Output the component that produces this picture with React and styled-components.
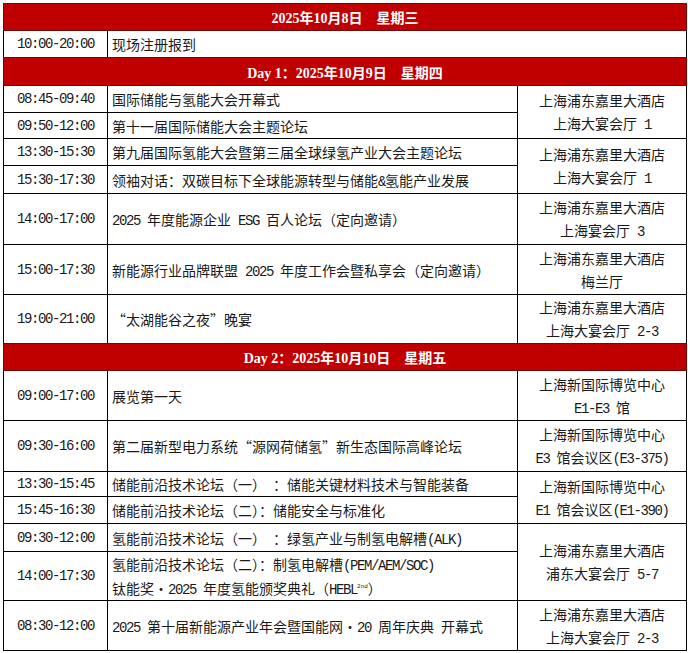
import React from "react";
import styled, { createGlobalStyle } from "styled-components";

const GlobalStyle = createGlobalStyle`
  body {
    margin: 0;
    background: #ffffff;
  }
`;

const HOTEL = "上海浦东嘉里大酒店";
const EXPO = "上海新国际博览中心";

// each section: header title + rows; venue.span tells how many rows it covers
const sections = [
  {
    title: "2025年10月8日　星期三",
    h: 26,
    rows: [
      { time: "10:00-20:00", h: 26, desc: ["现场注册报到"], wide: true },
    ],
  },
  {
    title: "Day 1：2025年10月9日　星期四",
    h: 27,
    rows: [
      { time: "08:45-09:40", h: 26, desc: ["国际储能与氢能大会开幕式"], venue: { span: 2, lines: [HOTEL, "上海大宴会厅 1"] } },
      { time: "09:50-12:00", h: 25, desc: ["第十一届国际储能大会主题论坛"] },
      { time: "13:30-15:30", h: 26, desc: ["第九届国际氢能大会暨第三届全球绿氢产业大会主题论坛"], venue: { span: 2, lines: [HOTEL, "上海大宴会厅 1"] } },
      { time: "15:30-17:30", h: 27, desc: ["领袖对话：双碳目标下全球能源转型与储能&氢能产业发展"] },
      { time: "14:00-17:00", h: 50, desc: ["2025 年度能源企业 ESG 百人论坛（定向邀请）"], venue: { span: 1, lines: [HOTEL, "上海宴会厅 3"] } },
      { time: "15:00-17:30", h: 49, desc: ["新能源行业品牌联盟 2025 年度工作会暨私享会（定向邀请）"], venue: { span: 1, lines: [HOTEL, "梅兰厅"] } },
      { time: "19:00-21:00", h: 48, desc: ["“太湖能谷之夜”晚宴"], venue: { span: 1, lines: [HOTEL, "上海大宴会厅 2-3"] } },
    ],
  },
  {
    title: "Day 2：2025年10月10日　星期五",
    h: 26,
    rows: [
      { time: "09:00-17:00", h: 49, desc: ["展览第一天"], venue: { span: 1, lines: [EXPO, "E1-E3 馆"] } },
      { time: "09:30-16:00", h: 50, desc: ["第二届新型电力系统“源网荷储氢”新生态国际高峰论坛"], venue: { span: 1, lines: [EXPO, "E3 馆会议区(E3-375)"] } },
      { time: "13:30-15:45", h: 24, desc: ["储能前沿技术论坛（一）　：储能关键材料技术与智能装备"], venue: { span: 2, lines: [EXPO, "E1 馆会议区(E1-390)"] } },
      { time: "15:45-16:30", h: 26, desc: ["储能前沿技术论坛（二）：储能安全与标准化"] },
      { time: "09:30-12:00", h: 27, desc: ["氢能前沿技术论坛（一）　：绿氢产业与制氢电解槽(ALK)"], venue: { span: 2, lines: [HOTEL, "浦东大宴会厅 5-7"] } },
      { time: "14:00-17:30", h: 48, desc: ["氢能前沿技术论坛（二）：制氢电解槽(PEM/AEM/SOC)", "钛能奖·2025 年度氢能颁奖典礼（HEBL^2nd）"] },
      { time: "08:30-12:00", h: 49, desc: ["2025 第十届新能源产业年会暨国能网·20 周年庆典 开幕式"], venue: { span: 1, lines: [HOTEL, "上海大宴会厅 2-3"] } },
    ],
  },
];

// half-width runs get the narrow mono face, like SimSun's latin
function mixed(text) {
  return text.split(/([\x20-\x7E]+)/).map((part, i) => {
    if (!part) return null;
    if (/^[\x20-\x7E]+$/.test(part)) {
      const sup = part.split("^");
      if (sup.length > 1) {
        return (
          <Latin key={i}>
            {sup[0]}
            <Sup>{sup[1]}</Sup>
          </Latin>
        );
      }
      return <Latin key={i}>{part}</Latin>;
    }
    return <span key={i}>{part}</span>;
  });
}

export default function App() {
  return (
    <>
      <GlobalStyle />
      <Page>
        <Schedule>
          {sections.map((sec) => (
            <React.Fragment key={sec.title}>
              <DayHeader $h={sec.h}>{sec.title}</DayHeader>
              {sec.rows.map((row) => (
                <React.Fragment key={row.time + row.desc[0]}>
                  <TimeCell $h={row.h}>
                    <Latin>{row.time}</Latin>
                  </TimeCell>
                  <DescCell $wide={row.wide}>
                    {row.desc.map((line) => (
                      <Line key={line}>{mixed(line)}</Line>
                    ))}
                  </DescCell>
                  {row.venue && (
                    <VenueCell $span={row.venue.span}>
                      {row.venue.lines.map((line) => (
                        <Line key={line}>{mixed(line)}</Line>
                      ))}
                    </VenueCell>
                  )}
                </React.Fragment>
              ))}
            </React.Fragment>
          ))}
        </Schedule>
      </Page>
    </>
  );
}

const Page = styled.div`
  padding: 3px 0 0 3px;
`;

const Schedule = styled.div`
  display: inline-grid;
  grid-template-columns: 103px 409px 168px;
  gap: 1px;
  padding: 1px;
  background: #000000;
  font-family: "Noto Sans CJK SC", sans-serif;
  font-size: 14px;
  color: #1a1a1a;
`;

const DayHeader = styled.div`
  grid-column: 1 / -1;
  height: ${(p) => p.$h}px;
  display: flex;
  align-items: center;
  justify-content: center;
  background: #c00000;
  box-shadow: 0 0 0 1px #700a0a;
  color: #ffffff;
  font-family: "Liberation Serif", "Noto Sans CJK SC", serif;
  font-weight: bold;
  font-size: 14px;
  white-space: pre;
`;

const Cell = styled.div`
  background: #ffffff;
  display: flex;
  flex-direction: column;
  justify-content: center;
  line-height: 23px;
`;

const TimeCell = styled(Cell)`
  min-height: ${(p) => p.$h}px;
  align-items: center;
`;

const DescCell = styled(Cell)`
  grid-column: ${(p) => (p.$wide ? "span 2" : "auto")};
  padding-left: 4px;
  line-height: 24px;
`;

const VenueCell = styled(Cell)`
  grid-row: span ${(p) => p.$span};
  align-items: center;
  text-align: center;
`;

const Line = styled.div`
  white-space: pre;
`;

const Latin = styled.span`
  font-family: "Liberation Mono", monospace;
  letter-spacing: -1.4px;
  line-height: 1;
`;

const Sup = styled.sup`
  font-size: 6px;
  letter-spacing: 0;
  vertical-align: 6px;
  line-height: 0;
`;
